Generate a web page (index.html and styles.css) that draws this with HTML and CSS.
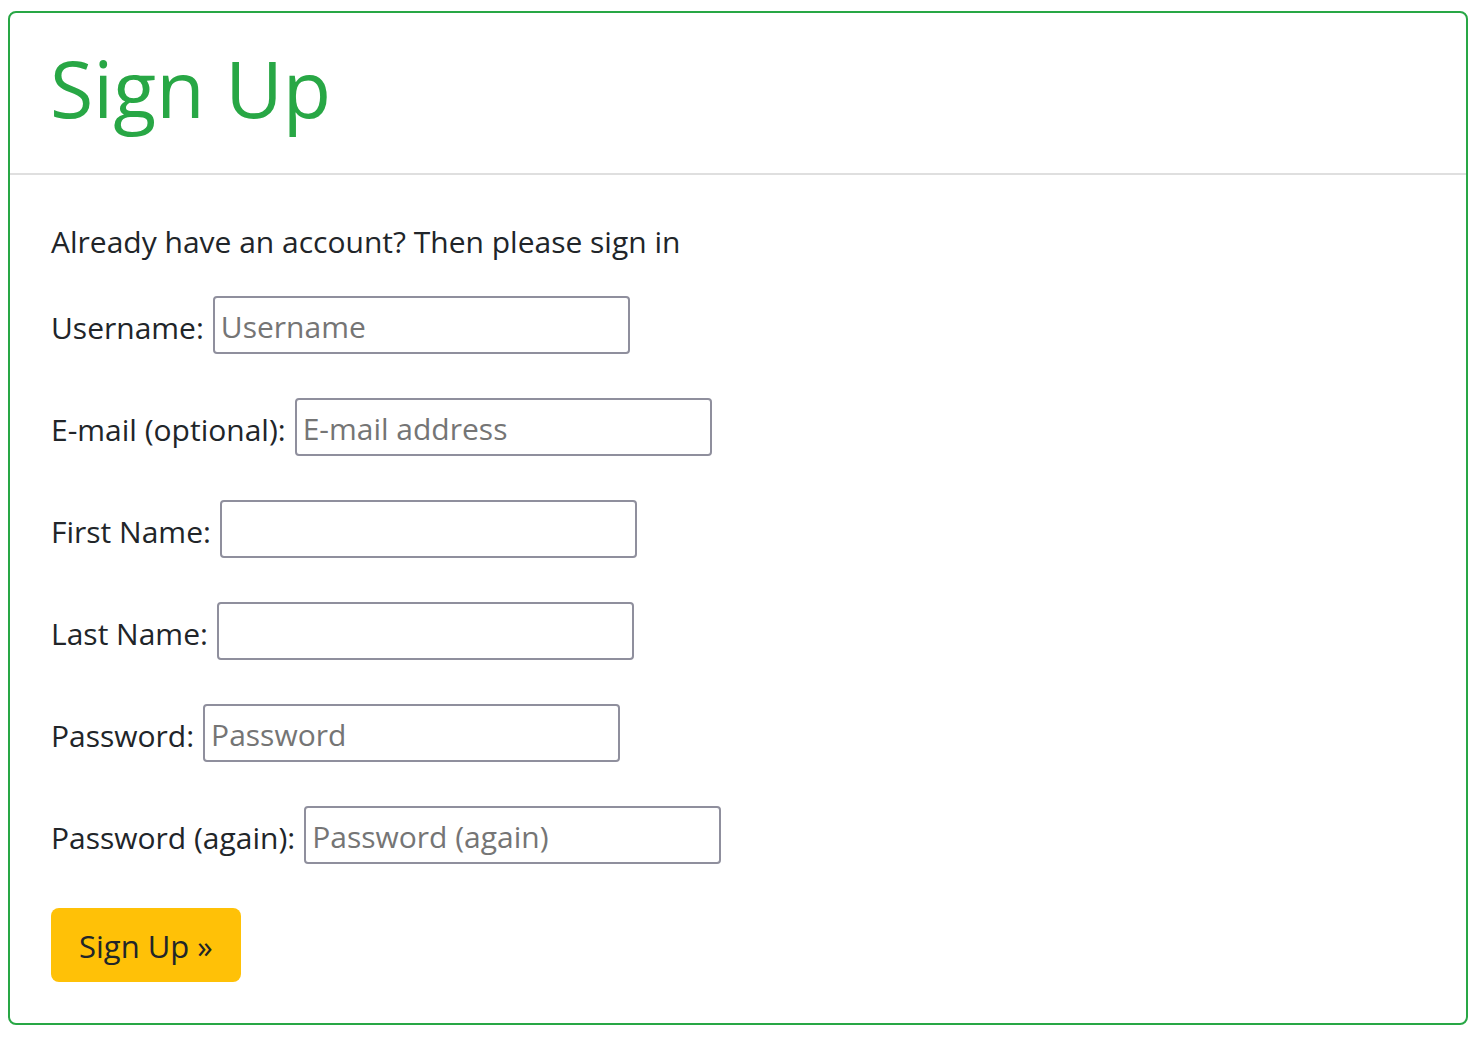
FILE: index.html
```html
<!DOCTYPE html>
<html lang="en">
<head>
<meta charset="utf-8">
<title>Sign Up</title>
<link rel="stylesheet" href="styles.css">
</head>
<body>
<div class="card">
  <div class="card-header">
    <h1 class="title">Sign Up</h1>
  </div>
  <div class="card-body">
    <p class="intro">Already have an account? Then please sign in</p>
    <form class="signup">
      <div class="row"><label class="lbl" for="u">Username:</label><input class="field" id="u" type="text" placeholder="Username"></div>
      <div class="row"><label class="lbl" for="e">E-mail (optional):</label><input class="field" id="e" type="text" placeholder="E-mail address"></div>
      <div class="row"><label class="lbl" for="f">First Name:</label><input class="field" id="f" type="text"></div>
      <div class="row"><label class="lbl" for="l">Last Name:</label><input class="field" id="l" type="text"></div>
      <div class="row"><label class="lbl" for="p1">Password:</label><input class="field" id="p1" type="password" placeholder="Password"></div>
      <div class="row"><label class="lbl" for="p2">Password (again):</label><input class="field" id="p2" type="password" placeholder="Password (again)"></div>
      <button class="btn" type="button">Sign Up &raquo;</button>
    </form>
  </div>
</div>
</body>
</html>
```
FILE: styles.css
```css
html, body {
  margin: 0;
  padding: 0;
  background: #fff;
}
body {
  padding: 11px 10px 12px 8px;
  font-family: "Open Sans", "Noto Sans", sans-serif;
  font-size: 30px;
  color: #212529;
}
.card {
  border: 2px solid #28a745;
  border-radius: 8px;
  box-sizing: border-box;
  height: 1014px;
}
.card-header {
  padding: 19px 40px 29px 40px;
  border-bottom: 2px solid #dfdfdf;
  height: 112px;
}
.title {
  margin: 0;
  font-size: 79px;
  font-weight: 400;
  line-height: 112px;
  color: #28a745;
}
.card-body {
  padding: 43px 40px 40px 41px;
}
.intro {
  margin: 0 0 30px 0;
  line-height: 48px;
}
.signup {
  display: flex;
  flex-direction: column;
  align-items: flex-start;
}
.row {
  display: flex;
  align-items: center;
  height: 58px;
  margin-bottom: 44px;
}
.lbl {
  margin-right: 9px;
  padding-top: 5px;
  line-height: 48px;
}
.field {
  width: 417px;
  height: 58px;
  box-sizing: border-box;
  border: 2px solid #8f8f9d;
  border-radius: 4px;
  padding: 2px 6px 0 6px;
  font-family: inherit;
  font-size: 30px;
  color: #212529;
  background: #fff;
  outline: none;
}
.field::placeholder {
  color: #757575;
}
.btn {
  height: 74px;
  padding: 2px 28px 0 28px;
  border: none;
  border-radius: 8px;
  background: #ffc107;
  color: #212529;
  font-family: inherit;
  font-size: 31px;
}
```
